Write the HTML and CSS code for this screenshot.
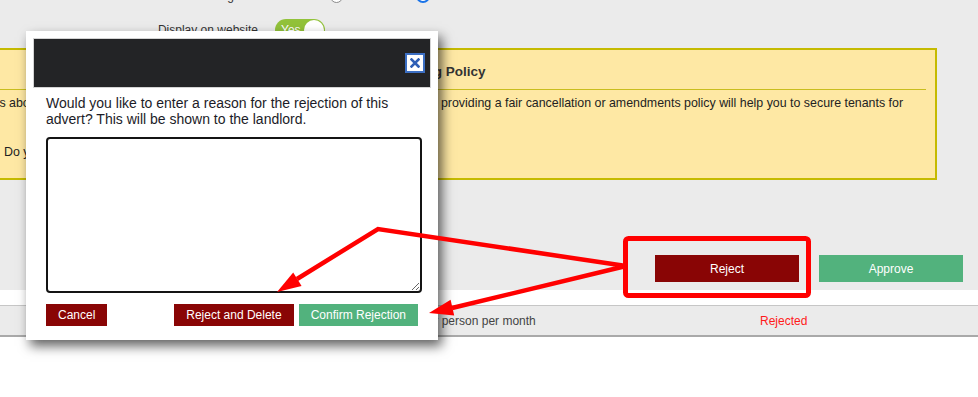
FILE: index.html
```html
<!DOCTYPE html>
<html lang="en">
<head>
  <meta charset="UTF-8">
  <meta name="viewport" content="width=device-width, initial-scale=1.0">
  <title>Advert Review</title>
  <link rel="stylesheet" href="styles.css">
</head>
<body>
  <div class="panel">
    <div class="settings">
      <span class="field-label">Let Agreed</span>
      <div class="field-control radios">
        <span class="radio"></span>
        <span class="radio radio-on"></span>
      </div>

      <span class="field-label">Display on website</span>
      <div class="field-control">
        <span class="toggle"><span class="toggle-text">Yes</span><span class="toggle-knob"></span></span>
      </div>
    </div>

    <div class="notice">
      <h3>Flexible Tenancy Cancellation and Amendments Booking Policy</h3>
      <p class="notice-lead">Tenants often ask questions about what happens if their plans change before they move in or after arriving, providing a fair cancellation or amendments policy will help you to secure tenants for</p>
      <p>Do you offer a flexible cancellation policy?</p>
    </div>

    <div class="actions">
      <button class="btn btn-red btn-wide">Reject</button>
      <button class="btn btn-green btn-wide">Approve</button>
    </div>
  </div>

  <div class="listing">
    <div class="listing-row">
      <span class="cell"></span>
      <span class="cell">per person per month</span>
      <span class="cell status-rejected">Rejected</span>
    </div>
  </div>

  <!-- rejection dialog -->
  <div class="modal">
    <div class="modal-header">
      <button class="modal-close" title="Close">
        <svg width="10" height="10" viewBox="0 0 10 10"><path d="M1.5 1.5 L8.5 8.5 M8.5 1.5 L1.5 8.5" stroke="#2f5fb6" stroke-width="2.6" stroke-linecap="square"/></svg>
      </button>
    </div>
    <div class="modal-body">
      <p>Would you like to enter a reason for the rejection of this advert? This will be shown to the landlord.</p>
      <textarea class="reason" autofocus></textarea>
      <div class="modal-buttons">
        <button class="btn btn-red">Cancel</button>
        <div class="modal-buttons-right">
          <button class="btn btn-red">Reject and Delete</button>
          <button class="btn btn-green">Confirm Rejection</button>
        </div>
      </div>
    </div>
  </div>

  <!-- screenshot annotations -->
  <svg class="annotations" width="978" height="397" viewBox="0 0 978 397">
    <rect x="625.5" y="238.5" width="183" height="57" rx="3" fill="none" stroke="#ff0000" stroke-width="5"/>
    <polyline points="297,279 378,229 626,266 452,308" fill="none" stroke="#ff0000" stroke-width="4.5" stroke-linejoin="miter"/>
    <polygon points="277,292 301.6,286.1 293.2,272.5" fill="#ff0000"/>
    <polygon points="429,313 454.2,315.4 450.6,299.8" fill="#ff0000"/>
  </svg>
</body>
</html>
```

FILE: styles.css
```css
body {
  margin: 0;
  background: #ffffff;
  font-family: "Liberation Sans", Arial, sans-serif;
  font-size: 12px;
  color: #333;
  overflow: hidden;
  width: 978px;
  height: 397px;
  position: relative;
}

.panel {
  background: #ebebeb;
  margin-top: -17px;
  padding-bottom: 8px;
}

.settings {
  display: grid;
  grid-template-columns: 258px auto;
  grid-template-rows: 26px 22px;
  column-gap: 17px;
  row-gap: 10px;
  align-items: center;
}

.field-label {
  text-align: right;
  color: #333;
}

.field-control {
  display: flex;
  align-items: center;
}

.radios {
  padding-left: 55px;
  gap: 73px;
}

.radio {
  width: 11px;
  height: 11px;
  border: 1px solid #8a8a8a;
  border-radius: 50%;
  background: #fff;
}

.radio-on {
  border: 2px solid #1a73e8;
  width: 10px;
  height: 10px;
}

.toggle {
  display: flex;
  align-items: center;
  justify-content: space-between;
  width: 50px;
  height: 22px;
  box-sizing: border-box;
  padding: 0 1px 0 6px;
  background: #92c23a;
  border-radius: 11px;
}

.toggle-text {
  color: #fff;
  font-size: 12px;
}

.toggle-knob {
  width: 20px;
  height: 20px;
  border-radius: 50%;
  background: #fff;
}

.notice {
  margin: 7px 41px 0 -6px;
  background: #fee8a4;
  border: 2px solid #c5ba00;
  color: #222;
}

.notice h3 {
  margin: 0 9px 0 0;
  padding: 4px 0 0 80px;
  height: 35px;
  line-height: 35px;
  font-size: 13.5px;
  font-weight: bold;
  color: #333;
  border-bottom: 1px solid #c9bd1e;
  white-space: nowrap;
}

.notice p {
  margin: 33px 0 0;
  padding: 0 0 18px 8px;
  font-size: 12.4px;
  line-height: 16px;
}

.notice .notice-lead {
  margin: 0;
  padding: 5px 0 0 8px;
  text-indent: -152px;
  white-space: nowrap;
  overflow: hidden;
}

.actions {
  display: flex;
  justify-content: flex-end;
  gap: 20px;
  margin-top: 75px;
  padding-right: 15px;
}

.btn {
  font-family: "Liberation Sans", Arial, sans-serif;
  font-size: 12px;
  color: #fff;
  border: none;
  border-radius: 0;
  padding: 0 12px;
  height: 22px;
  cursor: pointer;
}

.btn-wide {
  width: 144px;
  height: 27px;
}

.btn-red {
  background: #890505;
}

.btn-green {
  background: #52b27d;
}

.listing {
  padding-top: 15px;
}

.listing-row {
  display: grid;
  grid-template-columns: 421px 339px 1fr;
  align-items: center;
  height: 29px;
  background: #ebebeb;
  border-top: 1px solid #c6c6c6;
  border-bottom: 2px solid #a9a9a9;
}

.cell {
  color: #444;
}

.status-rejected {
  color: #ff1a1a;
}

/* dialog */

.modal {
  position: absolute;
  left: 26px;
  top: 31px;
  width: 412px;
  box-sizing: border-box;
  padding: 7px 7px 14px;
  background: #fff;
  box-shadow: 4px 6px 11px rgba(0, 0, 0, 0.62);
}

.modal-header {
  display: flex;
  justify-content: flex-end;
  align-items: center;
  height: 48px;
  padding-right: 5px;
  background: #232426;
  border: 1px solid #d4d4d4;
}

.modal-close {
  display: flex;
  align-items: center;
  justify-content: center;
  width: 20px;
  height: 20px;
  padding: 0;
  background: #fff;
  border: 2px solid #3c6fc3;
}

.modal-body {
  padding: 0 9px 0 13px;
}

.modal-body p {
  margin: 7px 0 0;
  font-size: 14px;
  line-height: 16px;
  color: #1c1c28;
}

.reason {
  display: block;
  box-sizing: border-box;
  width: 376px;
  height: 156px;
  margin-top: 10px;
  padding: 2px 3px;
  border: 2px solid #141414;
  border-radius: 4px;
  outline: none;
  font-family: "Liberation Sans", Arial, sans-serif;
  font-size: 13px;
}

.modal-buttons {
  display: flex;
  justify-content: space-between;
  margin-top: 11px;
  padding-right: 4px;
}

.modal-buttons-right {
  display: flex;
  gap: 5px;
}

.annotations {
  position: absolute;
  left: 0;
  top: 0;
  pointer-events: none;
}
```
